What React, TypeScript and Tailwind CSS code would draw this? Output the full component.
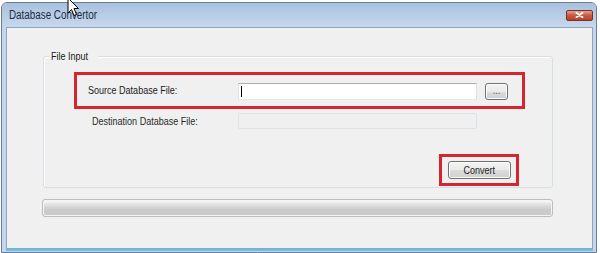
import React from "react";

const ui = "font-['Liberation_Sans',Arial,sans-serif]";
// the reference text is horizontally condensed
const squeeze = "inline-block scale-x-[0.82]";

function WinButton({ label, className }: { label: string; className: string }) {
  return (
    <button
      className={`${className} ${ui} flex items-center justify-center rounded-[3px] border border-[#707070] bg-[linear-gradient(#f2f2f2_0%,#ebebeb_50%,#dddddd_51%,#cfcfcf_100%)] text-[11px] leading-none shadow-[inset_0_0_0_1px_#fcfcfc]`}
    >
      <span className={`${squeeze} origin-center`}>{label}</span>
    </button>
  );
}

export default function App() {
  return (
    <div className="relative w-[600px] h-[253px] overflow-hidden bg-white">
      {/* window frame */}
      <div className="ml-px mt-[2px] flex h-[251px] w-[596px] flex-col rounded-t-[6px] border border-[#6a7d96] bg-[#c3d6ec]">
        <div className="flex h-[24px] shrink-0 items-center justify-between rounded-t-[5px] bg-[linear-gradient(#a9c1de,#c6d8ed)] pl-[7px] pr-[3px]">
          <span className={`${ui} ${squeeze} origin-left text-[12px] leading-none text-[#1c2b3d]`}>Database Convertor</span>
          <div className="flex h-[11px] w-[27px] items-center justify-center rounded-[2px] border border-[#7a2f24] bg-[linear-gradient(#e2a08f,#cc5840_50%,#b8412c)]">
            <svg width="9" height="6" viewBox="0 0 9 6">
              <path d="M1.5 0.8 L7.5 5.2 M7.5 0.8 L1.5 5.2" stroke="#fff" strokeWidth="1.8" strokeLinecap="round" />
            </svg>
          </div>
        </div>

        <div className="flex flex-1 flex-col pl-[4px] pr-[3px]">
          {/* client area */}
          <div className="h-[222px] border border-[#8ea4bf] bg-[#f0f0f0]">
            <div className="relative ml-[36px] mt-[28px] h-[132px] w-[510px] rounded-[3px] border border-[#d5dfe5] shadow-[inset_1px_1px_0_#fff]">
              <span className={`${ui} absolute left-[5px] top-[-8px] bg-[#f0f0f0] px-[2px] text-[11px] leading-[14px] text-[#1a1a1a]`}>
                <span className={`${squeeze} origin-left`}>File Input</span>
              </span>

              <div className="ml-[30px] mt-[15px] flex h-[37px] w-[451px] items-center border-[3px] border-[#d42530]">
                <span className={`${ui} ml-[11px] w-[150px] text-[11px] leading-none text-[#1a1a1a]`}>
                  <span className={`${squeeze} origin-left`}>Source Database File:</span>
                </span>
                <div className="relative mt-[2px] h-[17px] w-[239px] border border-[#abadb3] border-b-[#e3e9ef] border-l-[#e2e3ea] border-r-[#dbdfe6] bg-white">
                  <div className="ml-[2px] mt-[2px] h-[11px] w-px bg-black" />
                </div>
                <WinButton label="..." className="ml-[8px] mt-[2px] h-[17px] w-[23px] pb-[3px] text-[#555]" />
              </div>

              <div className="mt-[4px] flex h-[16px] items-center">
                <span className={`${ui} ml-[48px] w-[146px] text-[11px] leading-none text-[#2a2a2a]`}>
                  <span className={`${squeeze} origin-left`}>Destination Database File:</span>
                </span>
                <div className="h-[16px] w-[239px] rounded-[1px] border border-[#dde3e9] bg-[#f0f0f0]" />
              </div>

              <div className="ml-[395px] mt-[25px] flex h-[32px] w-[80px] items-center justify-center border-[3px] border-[#d42530]">
                <WinButton label="Convert" className="h-[18px] w-[63px] text-[#1a1a1a]" />
              </div>
            </div>

            {/* progress bar */}
            <div className="ml-[35px] mt-[11px] h-[18px] w-[511px] rounded-[3px] border border-[#bcbcbc] bg-[linear-gradient(#fdfdfd_0%,#e4e4e4_25%,#cbcbcb_60%,#c9c9c9_100%)] shadow-[inset_0_0_0_1px_#f4f4f4]" />
          </div>
          <div className="h-[2px] bg-[#63c2e8]" />
        </div>
      </div>

      {/* mouse pointer */}
      <svg className="absolute left-[67px] top-[-3px]" width="13" height="20" viewBox="0 0 13 20">
        <path d="M1 1 L1 16 L4.5 12.5 L7 18.5 L9.5 17.5 L7 11.5 L11.5 11.5 Z" fill="#fff" stroke="#000" strokeWidth="1" strokeLinejoin="round" />
      </svg>
    </div>
  );
}
